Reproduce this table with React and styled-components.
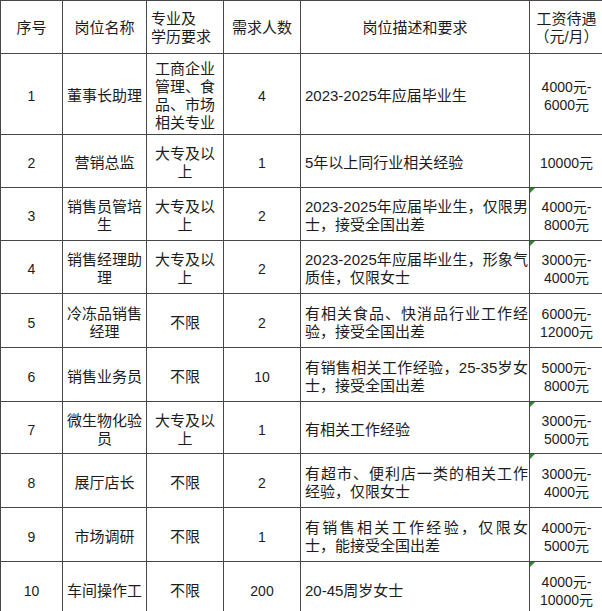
import { Fragment } from "react";
import styled, { createGlobalStyle } from "styled-components";

const GlobalStyle = createGlobalStyle`
  html, body {
    margin: 0;
    padding: 0;
    background: #fff;
  }
  body {
    font-family: "Liberation Sans", "Noto Sans CJK SC", sans-serif;
    color: #1c1c1c;
    overflow: hidden;
  }
`;

const Sheet = styled.div`
  display: grid;
  grid-template-columns: 62px 84px 77px 77px 229px 74px;
  grid-template-rows: 53px 81px 53px 53px 53px 54px 54px 52px 54px 54px 54px;
  border-left: 1px solid #474747;
  border-top: 1px solid #474747;
  width: max-content;
`;

const Cell = styled.div`
  position: relative;
  box-sizing: border-box;
  border-right: 1px solid #474747;
  border-bottom: 1px solid #474747;
  display: flex;
  flex-direction: column;
  justify-content: center;
  align-items: ${(p) => (p.$align === "left" ? "stretch" : "center")};
  text-align: ${(p) => p.$align || "center"};
  padding: ${(p) => (p.$align === "left" ? "4px 1px 0 4px" : "4px 3px 0 3px")};
  font-size: ${(p) => (p.$num ? "14px" : "15px")};
  line-height: 18px;
  overflow: hidden;
`;

const HeadCell = styled(Cell)`
  font-size: 15px;
  padding-top: 2px;
  align-items: ${(p) => (p.$align === "left" ? "flex-start" : "center")};
`;

const Line = styled.div`
  white-space: nowrap;
  text-align: left;
  text-align-last: ${(p) => (p.$fill ? "justify" : "auto")};
`;

const SalaryLine = styled.div`
  white-space: nowrap;
`;

const Flag = styled.span`
  position: absolute;
  top: 0;
  left: 0;
  width: 0;
  height: 0;
  border-top: 5px solid #2a8a2a;
  border-right: 5px solid transparent;
`;

const rows = [
  {
    no: 1,
    name: "董事长助理",
    edu: "工商企业管理、食品、市场相关专业",
    count: 4,
    desc: ["2023-2025年应届毕业生"],
    pay: ["4000元-", "6000元"],
  },
  { no: 2, name: "营销总监", edu: "大专及以上", count: 1, desc: ["5年以上同行业相关经验"], pay: ["10000元"] },
  {
    no: 3,
    name: "销售员管培生",
    edu: "大专及以上",
    count: 2,
    desc: ["2023-2025年应届毕业生，仅限男", "士，接受全国出差"],
    pay: ["4000元-", "8000元"],
    flag: true,
  },
  {
    no: 4,
    name: "销售经理助理",
    edu: "大专及以上",
    count: 2,
    desc: ["2023-2025年应届毕业生，形象气", "质佳，仅限女士"],
    pay: ["3000元-", "4000元"],
    flag: true,
  },
  {
    no: 5,
    name: "冷冻品销售经理",
    edu: "不限",
    count: 2,
    desc: ["有相关食品、快消品行业工作经", "验，接受全国出差"],
    pay: ["6000元-", "12000元"],
  },
  {
    no: 6,
    name: "销售业务员",
    edu: "不限",
    count: 10,
    desc: ["有销售相关工作经验，25-35岁女", "士，接受全国出差"],
    pay: ["5000元-", "8000元"],
  },
  {
    no: 7,
    name: "微生物化验员",
    edu: "大专及以上",
    count: 1,
    desc: ["有相关工作经验"],
    pay: ["3000元-", "5000元"],
    flag: true,
  },
  {
    no: 8,
    name: "展厅店长",
    edu: "不限",
    count: 2,
    desc: ["有超市、便利店一类的相关工作", "经验，仅限女士"],
    pay: ["3000元-", "4000元"],
    flag: true,
  },
  {
    no: 9,
    name: "市场调研",
    edu: "不限",
    count: 1,
    desc: ["有销售相关工作经验，仅限女", "士，能接受全国出差"],
    pay: ["4000元-", "5000元"],
  },
  {
    no: 10,
    name: "车间操作工",
    edu: "不限",
    count: 200,
    desc: ["20-45周岁女士"],
    pay: ["4000元-", "10000元"],
    flag: true,
  },
];

export default function App() {
  return (
    <>
      <GlobalStyle />
      <Sheet>
        <HeadCell>序号</HeadCell>
        <HeadCell>岗位名称</HeadCell>
        <HeadCell $align="left">
          <Line>专业及</Line>
          <Line>学历要求</Line>
        </HeadCell>
        <HeadCell>需求人数</HeadCell>
        <HeadCell>岗位描述和要求</HeadCell>
        <HeadCell>
          <SalaryLine>工资待遇</SalaryLine>
          <SalaryLine>（元/月）</SalaryLine>
        </HeadCell>

        {rows.map((r) => (
          <Fragment key={r.no}>
            <Cell $num>{r.no}</Cell>
            <Cell>{r.name}</Cell>
            <Cell>{r.edu}</Cell>
            <Cell $num>{r.count}</Cell>
            <Cell $align="left">
              {r.desc.map((line, i) => (
                <Line key={i} $fill={i < r.desc.length - 1}>{line}</Line>
              ))}
            </Cell>
            <Cell $num>
              {r.flag && <Flag />}
              {r.pay.map((p, i) => (
                <SalaryLine key={i}>{p}</SalaryLine>
              ))}
            </Cell>
          </Fragment>
        ))}
      </Sheet>
    </>
  );
}
